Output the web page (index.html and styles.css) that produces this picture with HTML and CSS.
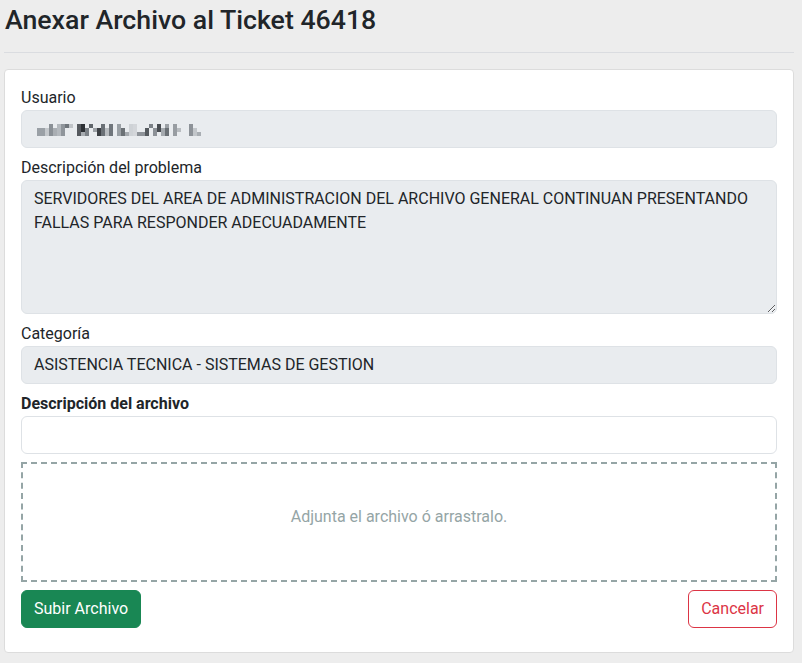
FILE: index.html
```html
<!DOCTYPE html>
<html lang="es">
<head>
<meta charset="utf-8">
<title>Anexar Archivo</title>
<link rel="stylesheet" href="styles.css">
</head>
<body>
<div class="page">
  <h3 class="title">Anexar Archivo al Ticket 46418</h3>
  <hr class="sep">
  <div class="card">
    <div class="group">
      <label class="label">Usuario</label>
      <div class="control readonly">
        <svg class="mosaic" width="184" height="12" viewBox="0 0 46 3" shape-rendering="crispEdges" aria-label="usuario oculto">
          <rect x="0" y="1" width="2" height="2" fill="#9aa0a6"/>
          <rect x="2" y="1" width="1" height="2" fill="#c4c8cc"/>
          <rect x="3" y="0" width="1" height="3" fill="#8a9096"/>
          <rect x="4" y="1" width="1" height="2" fill="#a9aeb3"/>
          <rect x="5" y="0" width="1" height="3" fill="#b4b9be"/>
          <rect x="6" y="0" width="1" height="3" fill="#8f959b"/>
          <rect x="7" y="0" width="1" height="1" fill="#6f757b"/>
          <rect x="8" y="0" width="1" height="1" fill="#c0c4c8"/>
          <rect x="10" y="0" width="1" height="3" fill="#55595e"/>
          <rect x="11" y="0" width="1" height="2" fill="#2c3035"/>
          <rect x="11" y="2" width="1" height="1" fill="#a7acb1"/>
          <rect x="12" y="1" width="1" height="2" fill="#7a8086"/>
          <rect x="13" y="0" width="1" height="1" fill="#5f656b"/>
          <rect x="14" y="1" width="1" height="1" fill="#9ca1a6"/>
          <rect x="15" y="1" width="1" height="2" fill="#3c4045"/>
          <rect x="16" y="0" width="1" height="3" fill="#6a7076"/>
          <rect x="17" y="1" width="1" height="2" fill="#b8bcc0"/>
          <rect x="18" y="0" width="1" height="3" fill="#70767c"/>
          <rect x="20" y="0" width="1" height="3" fill="#9aa0a5"/>
          <rect x="21" y="1" width="1" height="2" fill="#6b7176"/>
          <rect x="22" y="2" width="1" height="1" fill="#a5aaaf"/>
          <rect x="23" y="0" width="1" height="3" fill="#ced2d6"/>
          <rect x="24" y="0" width="1" height="3" fill="#d3d6da"/>
          <rect x="25" y="2" width="2" height="1" fill="#8e9399"/>
          <rect x="27" y="1" width="1" height="2" fill="#555a5f"/>
          <rect x="28" y="0" width="1" height="1" fill="#7b8187"/>
          <rect x="29" y="1" width="1" height="2" fill="#8c9197"/>
          <rect x="30" y="0" width="1" height="2" fill="#484c51"/>
          <rect x="31" y="1" width="1" height="2" fill="#a4a9ae"/>
          <rect x="32" y="0" width="1" height="1" fill="#9ca1a6"/>
          <rect x="32" y="1" width="1" height="2" fill="#6a7075"/>
          <rect x="34" y="0" width="1" height="3" fill="#989da2"/>
          <rect x="35" y="1" width="1" height="1" fill="#b9bdc1"/>
          <rect x="38" y="0" width="1" height="3" fill="#8d9298"/>
          <rect x="39" y="1" width="1" height="2" fill="#c2c6ca"/>
          <rect x="40" y="2" width="1" height="1" fill="#a9aeb3"/>
        </svg>
      </div>
    </div>
    <div class="group">
      <label class="label">Descripción del problema</label>
      <textarea class="control readonly area" readonly>SERVIDORES DEL AREA DE ADMINISTRACION DEL ARCHIVO GENERAL CONTINUAN PRESENTANDO FALLAS PARA RESPONDER ADECUADAMENTE</textarea>
    </div>
    <div class="group">
      <label class="label">Categoría</label>
      <div class="control readonly">ASISTENCIA TECNICA - SISTEMAS DE GESTION</div>
    </div>
    <div class="group">
      <label class="label strong">Descripción del archivo</label>
      <input class="control" type="text">
    </div>
    <div class="group">
      <div class="dropzone">Adjunta el archivo ó arrastralo.</div>
    </div>
    <div class="actions">
      <button class="btn btn-success">Subir Archivo</button>
      <button class="btn btn-outline-danger">Cancelar</button>
    </div>
  </div>
</div>
</body>
</html>
```
FILE: styles.css
```css
* { box-sizing: border-box; }
html, body { margin: 0; padding: 0; }
body {
  background: #ededed;
  font-family: Roboto, "Liberation Sans", sans-serif;
  font-size: 16px;
  line-height: 1.5;
  color: #212529;
}
.page {
  width: 790px;
  margin-left: 4px;
  padding-top: 4px;
}
.title {
  margin: 0 0 8px 1px;
  font-size: 26.7px;
  font-weight: 500;
  line-height: 1.2;
  color: #212529;
}
.sep {
  margin: 16px 0;
  border: 0;
  border-top: 1px solid #dadce0;
  opacity: 1;
}
.card {
  background: #fff;
  border: 1px solid #dcdcdc;
  border-radius: 4px;
  padding: 16px 16px 16px;
}
.group {
  margin-bottom: 8px;
}
.label {
  display: block;
  line-height: 24px;
}
.label.strong { font-weight: 700; }
.control {
  display: block;
  width: 100%;
  height: 38px;
  padding: 6px 12px;
  font-family: inherit;
  font-size: 16px;
  line-height: 24px;
  color: #212529;
  background: #fff;
  border: 1px solid #dee2e6;
  border-radius: 6px;
  outline: none;
}
.control.readonly {
  background: #e9ecef;
}
.mosaic {
  display: block;
  margin: 7px 0 0 3px;
}
.area {
  height: 134px;
  resize: vertical;
}
.dropzone {
  height: 120px;
  padding-top: 41px;
  border: 2px dashed #95a5a6;
  text-align: center;
  color: #95a5a6;
}
.actions {
  display: flex;
  justify-content: space-between;
  margin-bottom: 8px;
}
.btn {
  font-family: inherit;
  font-size: 16px;
  line-height: 24px;
  padding: 6px 12px;
  border-radius: 6px;
  border: 1px solid transparent;
  cursor: pointer;
}
.btn-success {
  background: #198754;
  border-color: #198754;
  color: #fff;
}
.btn-outline-danger {
  background: #fff;
  border-color: #dc3545;
  color: #dc3545;
}
```
